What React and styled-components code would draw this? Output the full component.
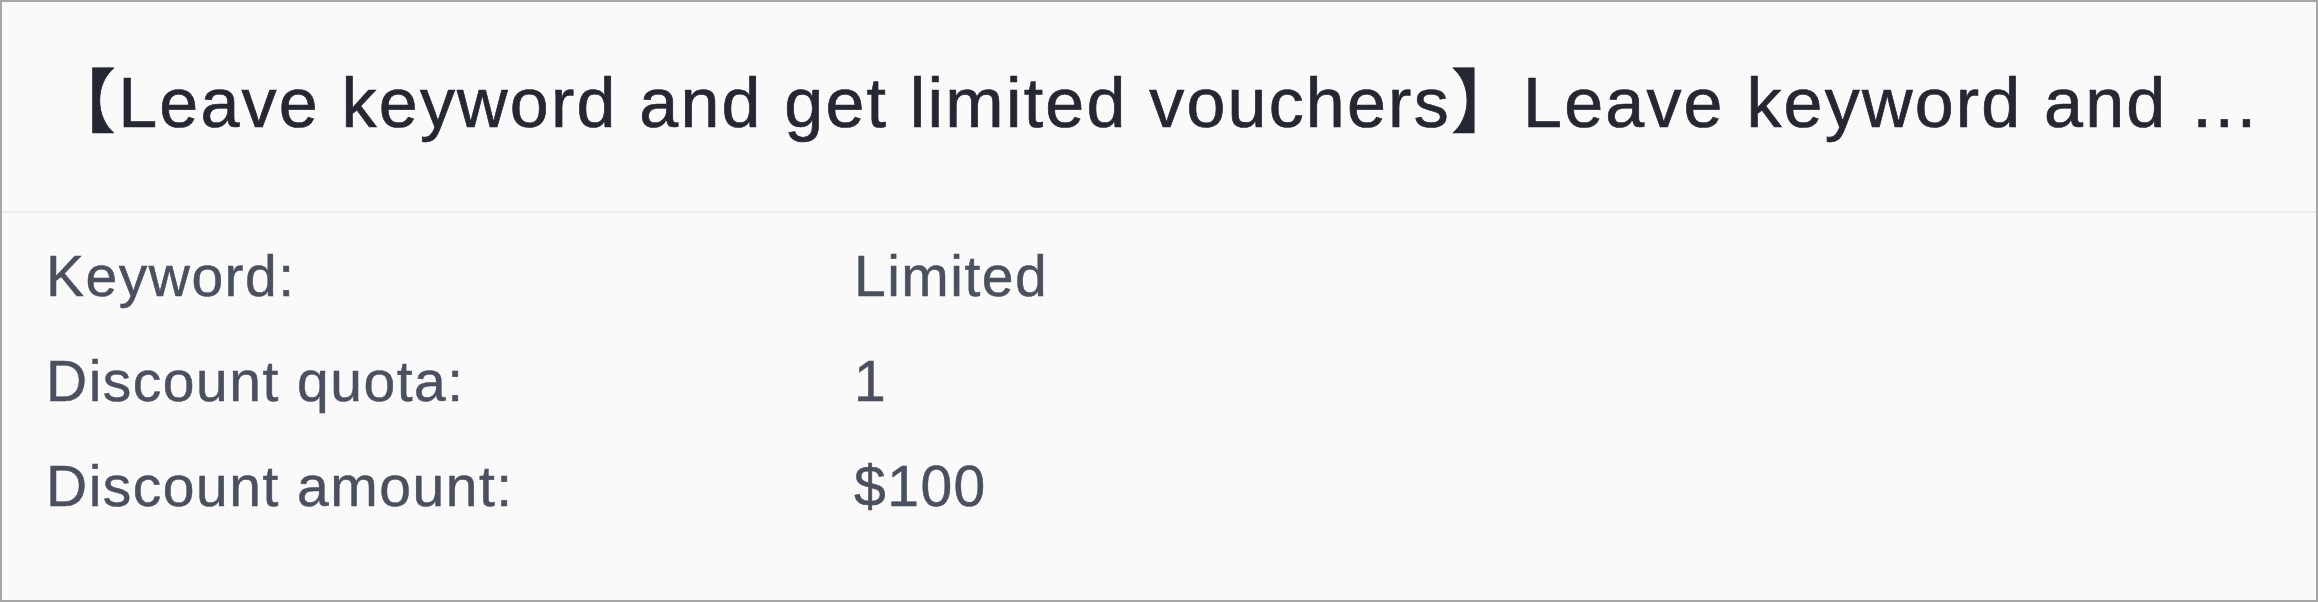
import React from 'react'
import styled, { createGlobalStyle } from 'styled-components'

const GlobalStyle = createGlobalStyle`
    html, body {
        margin: 0;
        padding: 0;
        background: #ffffff;
    }
    * {
        box-sizing: border-box;
    }
`

const Card = styled.div`
    width: 2318px;
    height: 602px;
    border: 2px solid #a6a6a6;
    background-color: #fafafa;
    font-family: "Liberation Sans", "Noto Sans CJK SC", Arial, sans-serif;
    display: flex;
    flex-direction: column;
`

const Header = styled.div`
    height: 211px;
    flex-shrink: 0;
    padding: 61px 44px 0 44px;
    border-bottom: 2px solid #ebecef;
    display: flex;
    align-items: flex-start;
    overflow: hidden;
`

const Title = styled.h1`
    margin: 0;
    min-width: 0;
    font-size: 70px;
    line-height: 80px;
    font-weight: 400;
    letter-spacing: 2.2px;
    color: #252733;
    white-space: nowrap;
    overflow: hidden;
    text-overflow: ellipsis;
    -webkit-text-stroke: 0.7px #252733;
`

const Details = styled.dl`
    margin: 0;
    padding: 23px 44px 0 44px;
    display: grid;
    grid-template-columns: 808px 1fr;
    row-gap: 25px;
    font-size: 57px;
    line-height: 80px;
    letter-spacing: 1.5px;
    color: #4a5060;
    -webkit-text-stroke: 0.5px #4a5060;
`

const Label = styled.dt`
    margin: 0;
`

const Value = styled.dd`
    margin: 0;
`

const rows = [
    { label: 'Keyword:', value: 'Limited' },
    { label: 'Discount quota:', value: '1' },
    { label: 'Discount amount:', value: '$100' },
]

export default function App() {
    return (
        <>
            <GlobalStyle />
            <Card>
                <Header>
                    <Title>
                        【Leave keyword and get limited vouchers】Leave keyword and get limited vouchers
                    </Title>
                </Header>
                <Details>
                    {rows.map(row => (
                        <React.Fragment key={row.label}>
                            <Label>{row.label}</Label>
                            <Value>{row.value}</Value>
                        </React.Fragment>
                    ))}
                </Details>
            </Card>
        </>
    )
}
